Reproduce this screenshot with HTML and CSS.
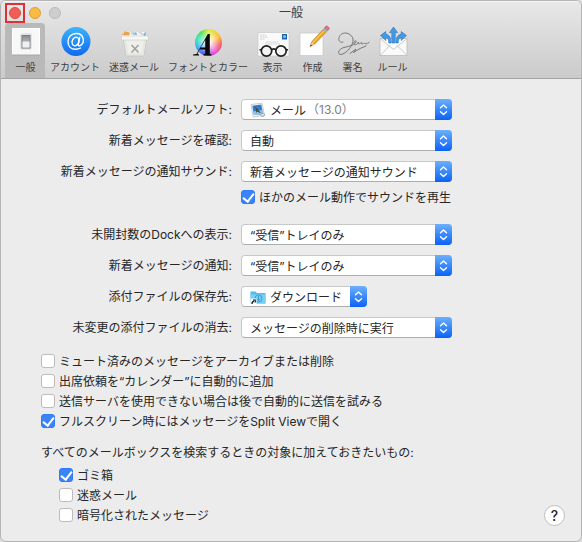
FILE: index.html
```html
<!DOCTYPE html>
<html lang="ja">
<head>
    <meta charset="UTF-8">
    <meta name="viewport" content="width=device-width, initial-scale=1.0">
    <title>一般</title>
    <link rel="stylesheet" href="styles.css">
</head>
<body>
    <svg width="0" height="0" class="defs" aria-hidden="true">
        <defs>
            <linearGradient id="blue" x1="0" y1="0" x2="0" y2="1">
                <stop offset="0" stop-color="#3cb4fb"/>
                <stop offset="1" stop-color="#1068f2"/>
            </linearGradient>
            <linearGradient id="grey" x1="0" y1="0" x2="0" y2="1">
                <stop offset="0" stop-color="#8b8e92"/>
                <stop offset="1" stop-color="#d5d7d9"/>
            </linearGradient>
            <symbol id="arrows" viewBox="0 0 17 21">
                <path d="M5.500 8.800 8.500 6 11.500 8.800M5.500 12.700 8.500 15.500 11.500 12.700" fill="none" stroke="#fff" stroke-width="1.400" stroke-linecap="round" stroke-linejoin="round"/>
            </symbol>
        </defs>
    </svg>
    <div class="window">
        <header>
            <div class="titlebar">
                <div class="lights">
                    <span class="close-mark"><button type="button" class="light close" aria-label="閉じる"></button></span>
                    <button type="button" class="light minimize" aria-label="しまう"></button>
                    <button type="button" class="light zoom" aria-label="拡大" disabled></button>
                </div>
                <h1>一般</h1>
            </div>
            <nav class="toolbar">
                <button type="button" class="tool active">
                    <svg width="32" height="32" viewBox="0 0 32 32">
                        <rect x="2.5" y="3.5" width="27" height="26" fill="#f8f8f9" stroke="#fff"/>
                        <path d="M2 30h28" stroke="#a5a5a5"/>
                        <rect x="10" y="8" width="12" height="17" rx="2" fill="#e4e5e7"/>
                        <rect x="12" y="10.500" width="8" height="12.500" fill="url(#grey)" stroke="#777a7e"/>
                        <path d="M12.500 16.500h7v6h-7z" fill="#eef0f1"/>
                    </svg>
                    一般
                </button>
                <button type="button" class="tool">
                    <svg width="32" height="32" viewBox="0 0 32 32">
                        <circle cx="17" cy="16.500" r="14.500" fill="url(#blue)"/>
                        <g fill="none" stroke="#fff" stroke-width="1.400" stroke-linecap="round">
                            <ellipse cx="16.500" cy="16.500" rx="3.300" ry="4.300" transform="rotate(18 16.500 16.500)"/>
                            <path d="M20.700 12.500 19.300 19c-.3 2 1.300 2.200 2.700 1.100 1.800-1.400 2.700-4 2.200-6.300C23.500 10.200 20.700 8.500 17.200 8.500 12.500 8.500 9 12 9 16.700c0 4.600 3 7.500 7.600 7.500 1.900 0 3.600-.4 5-1.200"/>
                        </g>
                    </svg>
                    アカウント
                </button>
                <button type="button" class="tool">
                    <svg width="32" height="32" viewBox="0 0 32 32">
                        <path d="m4 11 1-4 6-1 4 2 3-2 4 2 3-2 3 3-1 3z" fill="#f5f6f7" stroke="#ccc" stroke-width=".5"/>
                        <path d="m4 10 3-3.500 5 1-1 3z" fill="#eda04c"/>
                        <path d="m15 10 3-3 1 3zM25 10l3-3-1 4z" fill="#4ba3d8"/>
                        <path d="m12 9 4-2 3 3zM21 7l3 3 2-1z" fill="#b9c9d5"/>
                        <path d="M5 13h24l-3 18H8z" fill="#e6e6e2" stroke="#c3c3bf" stroke-width=".7"/>
                        <path d="M8 14h18l-2 14H10z" fill="#efefeb"/>
                        <path d="M3.500 11h27v4h-27z" fill="#f7f7f4" stroke="#c9c9c5" stroke-width=".6"/>
                        <path d="m13.500 20 7 7.500m0-7.500-7 7.500" stroke="#a09d93" stroke-width="1.400"/>
                    </svg>
                    迷惑メール
                </button>
                <button type="button" class="tool">
                    <svg width="32" height="32" viewBox="0 0 32 32">
                        <foreignObject x="3" y="4" width="27" height="27"><div class="wheel"></div></foreignObject>
                        <path d="M1 30.500h6v-1l-1.500-.5 2-4.500h5.700v4.200l-1.800.8v1h8v-1l-1.600-.7V9h-2L4.500 29l-3.500.5zM8.600 22.500l4.600-7.500v7.500z" fill="#090909"/>
                    </svg>
                    フォントとカラー
                </button>
                <button type="button" class="tool">
                    <svg width="32" height="32" viewBox="0 0 32 32">
                        <rect x="1" y="7.500" width="31" height="23.500" fill="#fafafa" stroke="#c4c4c4" stroke-width=".6"/>
                        <path d="M3 10h6M3 12h8M3 14h5M9 17h12M8 19h15" stroke="#bcbcbc" stroke-width=".7" stroke-dasharray="2 .6"/>
                        <rect x="25" y="9" width="5" height="5.500" fill="#1b68ae"/>
                        <circle cx="27.500" cy="11.500" r="1.500" fill="#71c4f0"/>
                        <g fill="#f4f4f4" stroke="#202020" stroke-width="1.700">
                            <circle cx="9.500" cy="26" r="5.200"/>
                            <circle cx="24" cy="26" r="5.200"/>
                            <path d="M14.500 25c1-1.600 3.500-1.600 4.500 0M4.500 24.500 2.500 25M29 24.500l2 .5" fill="none"/>
                        </g>
                    </svg>
                    表示
                </button>
                <button type="button" class="tool">
                    <svg width="32" height="32" viewBox="0 0 32 32">
                        <path d="M3 8h23v22.500H3z" fill="#fdfdfd" stroke="#c2c2c2" stroke-width=".6"/>
                        <path d="m13 21.500 2-5L27 3.500l3 2.700-12.500 13z" fill="#f3aa21" stroke="#a26e1b" stroke-width=".6"/>
                        <path d="m16 17.500 12-13" stroke="#ffd45c"/>
                        <path d="m13 21.500 2-4.500 2.500 2.200z" fill="#edcc9b"/>
                        <path d="m13 21.500 1-2 1 1z" fill="#222"/>
                        <path d="m25.500 5 2-2.300 3.300 2.900-2 2.200z" fill="#a6aeb2"/>
                        <path d="m27.500 2.700 1.300-1.400c1.400-1 4.200 1.400 3.200 2.900l-1.200 1.400z" fill="#df728b" stroke="#a45267" stroke-width=".5"/>
                    </svg>
                    作成
                </button>
                <button type="button" class="tool">
                    <svg width="32" height="32" viewBox="0 0 32 32">
                        <path d="M6 17C2 19 0 13 4 9.500 8 6 15 9 16 14 17 20 9 29 4 29.500 0 29.500 1 24 7 22.500 13 21 18 20 19 17 19.500 14.500 16.500 16 17 18.500 17.500 21 20.500 19.500 21.500 17 21 21 24 17.500 24.500 17.500 24 21 27 17.500 27.500 18 28 19.500 30 19 32 17.500M13 28.500 19 24 16.500 27.500 23 23.500 29 21" fill="none" stroke="#777" stroke-linecap="round" stroke-linejoin="round"/>
                    </svg>
                    署名
                </button>
                <button type="button" class="tool">
                    <svg width="32" height="32" viewBox="0 0 32 32">
                        <path d="M3 13.500h27V30.500H3z" fill="#fafafa" stroke="#b5b5b5" stroke-width=".7"/>
                        <path d="m3 30.500 10-10m17 10-10-10M3 13.500l13.500 11L30 13.500" fill="none" stroke="#c2c2c2" stroke-width=".9"/>
                        <path d="M14.800 18V7.500H12.500l4-5.500 4 5.500h-2.300V18zM11.800 18c0-3.500-.8-5-3-5.500v3L3.500 10.500 8.800 6.500v2.800c4 .5 5.200 4 5.200 8.700zM21.200 18c0-3.500.8-5 3-5.500v3L29.500 10.500 24.200 6.500v2.800c-4 .5-5.200 4-5.200 8.700z" fill="#429aea" stroke="#2870b8" stroke-width=".6"/>
                    </svg>
                    ルール
                </button>
            </nav>
        </header>
        <main>
            <form>
                <div class="fields">
                    <label for="mailer">デフォルトメールソフト:</label>
                    <div class="popup with-icon">
                        <select id="mailer"><option>メール</option></select>
                        <span class="content">
                            <svg width="16" height="16" viewBox="0 0 16 16">
                                <path d="m1 2.500 11-1.300 2.500 12L3.200 15z" fill="#fafafa" stroke="#aaa" stroke-width=".6"/>
                                <path d="m2.300 3.700 9-1.100 1.700 9.400-9.100 1.100z" fill="#2a7fd2"/>
                                <path d="m3.300 9.500 9.100-1.500.6 4-9.100 1.100z" fill="#8cc5ed"/>
                                <path d="m4.500 4.500 2.700 2 3.800 4.700-3.600-1.500-1.400 1 .2-2.400z" fill="#4f4a35"/>
                                <path d="M10 13c0-2.300 4.300-2.300 4.500 0 0 2.200-3.800 2.200-3.800 0" fill="none" stroke="#8c979d" stroke-width=".8"/>
                            </svg>
                            <span class="version">（13.0）</span>
                        </span>
                        <svg class="arrows" width="17" height="21"><use href="#arrows"/></svg>
                    </div>

                    <label for="check">新着メッセージを確認:</label>
                    <div class="popup">
                        <select id="check"><option>自動</option></select>
                        <svg class="arrows" width="17" height="21"><use href="#arrows"/></svg>
                    </div>

                    <label for="sound">新着メッセージの通知サウンド:</label>
                    <div class="popup">
                        <select id="sound"><option>新着メッセージの通知サウンド</option></select>
                        <svg class="arrows" width="17" height="21"><use href="#arrows"/></svg>
                    </div>
                </div>
                <label class="check sound-check"><input type="checkbox" checked>ほかのメール動作でサウンドを再生</label>

                <div class="fields">
                    <label for="dock">未開封数のDockへの表示:</label>
                    <div class="popup">
                        <select id="dock"><option>“受信”トレイのみ</option></select>
                        <svg class="arrows" width="17" height="21"><use href="#arrows"/></svg>
                    </div>

                    <label for="notice">新着メッセージの通知:</label>
                    <div class="popup">
                        <select id="notice"><option>“受信”トレイのみ</option></select>
                        <svg class="arrows" width="17" height="21"><use href="#arrows"/></svg>
                    </div>

                    <label for="folder">添付ファイルの保存先:</label>
                    <div class="popup with-icon short">
                        <select id="folder"><option>ダウンロード</option></select>
                        <span class="content">
                            <svg width="16" height="16" viewBox="0 0 16 16">
                                <path d="M.5 2.500h5L7 4h8.500v10.500H.5z" fill="#57b9e8"/>
                                <path d="M.5 5.300h15v9.200H.5z" fill="#76d0f5"/>
                                <circle cx="8.500" cy="9.500" r="3.500" fill="none" stroke="#3d9fcf"/>
                                <path d="M8.500 7v4.500M6.700 9.800l1.800 1.800 1.800-1.800" fill="none" stroke="#3d9fcf"/>
                                <path d="M.5 9.500h6V16h-6z" fill="#fff"/>
                                <path d="M2 15c0-2 .4-2.700 2-2.700M3 11h2.200v2.500" fill="none" stroke="#111" stroke-width="1.200"/>
                            </svg>
                        </span>
                        <svg class="arrows" width="17" height="21"><use href="#arrows"/></svg>
                    </div>

                    <label for="erase">未変更の添付ファイルの消去:</label>
                    <div class="popup">
                        <select id="erase"><option>メッセージの削除時に実行</option></select>
                        <svg class="arrows" width="17" height="21"><use href="#arrows"/></svg>
                    </div>
                </div>

                <div class="options">
                    <label class="check"><input type="checkbox">ミュート済みのメッセージをアーカイブまたは削除</label>
                    <label class="check"><input type="checkbox">出席依頼を“カレンダー”に自動的に追加</label>
                    <label class="check"><input type="checkbox">送信サーバを使用できない場合は後で自動的に送信を試みる</label>
                    <label class="check"><input type="checkbox" checked>フルスクリーン時にはメッセージをSplit Viewで開く</label>
                </div>

                <fieldset>
                    <legend>すべてのメールボックスを検索するときの対象に加えておきたいもの:</legend>
                    <label class="check"><input type="checkbox" checked>ゴミ箱</label>
                    <label class="check"><input type="checkbox">迷惑メール</label>
                    <label class="check"><input type="checkbox">暗号化されたメッセージ</label>
                </fieldset>
            </form>
            <button type="button" class="help" aria-label="ヘルプ">?</button>
        </main>
    </div>
</body>
</html>
```
FILE: styles.css
```css
* {
    box-sizing: border-box;
}
body {
    margin: 0;
    background-color: #ddd;
    color: #262626;
    font-family: Inter, "Noto Sans CJK JP", sans-serif;
    font-size: 12px;
    line-height: 20px;
}
button, select, input {
    font: inherit;
    color: inherit;
    margin: 0;
}
.defs {
    position: absolute;
}
.window {
    display: flex;
    flex-direction: column;
    min-height: 100vh;
    background-color: #ececec;
    border: 1px solid #b4b4b4;
    border-radius: 6px;
    overflow: hidden;
}
header {
    background: linear-gradient(#e8e8e8, #cbcbcb);
    border-bottom: 1px solid #a4a4a4;
    padding: 0 4px;
    box-shadow: inset 0 1px #f5f5f5;
}
.titlebar {
    display: grid;
    grid-template-columns: 1fr auto 1fr;
    align-items: center;
    height: 22px;
}
.titlebar h1 {
    align-self: start;
    margin: 0;
    font-size: 12px;
    font-weight: 400;
    line-height: 24px;
    color: #404040;
}
.lights {
    display: flex;
    align-items: center;
    gap: 8px;
}
.close-mark {
    display: flex;
    align-items: center;
    justify-content: center;
    width: 20px;
    height: 20px;
    margin-right: -4px;
    border: 2px solid #dc3237;
}
.light {
    width: 12px;
    height: 12px;
    padding: 0;
    border: 1px solid #b9b9b9;
    border-radius: 50%;
    background-color: #cecece;
}
.close {
    background-color: #f25e57;
    border-color: #de4b45;
}
.minimize {
    background-color: #f8bb44;
    border-color: #dd9f32;
}
.toolbar {
    display: flex;
}
.tool {
    display: flex;
    flex-direction: column;
    align-items: center;
    min-width: 40px;
    height: 55px;
    padding: 2px 4px 0 5px;
    border: none;
    background: none;
    font-size: 10px;
    line-height: 20px;
    color: #404040;
    white-space: nowrap;
}
.tool svg {
    flex: none;
    margin: 0 -2px;
    overflow: visible;
}
.tool.active {
    background-color: #b9b9b9;
    border-radius: 4px 4px 0 0;
}
.wheel {
    width: 27px;
    height: 27px;
    border-radius: 50%;
    background: radial-gradient(circle, #fff 5%, transparent 65%), conic-gradient(#d9ef3d, #ffbd35 60deg, #f35d64 100deg, #e64dd9 150deg, #5b4aee 200deg, #35a9f5 245deg, #36e1c1 285deg, #55e35b 325deg, #d9ef3d);
}
main {
    position: relative;
    flex: 1;
    padding: 20px 16px 16px 40px;
}
.fields {
    display: grid;
    grid-template-columns: 191px 211px;
    gap: 10px 9px;
    line-height: 21px;
}
.fields > label {
    text-align: right;
    white-space: nowrap;
}
.popup {
    display: grid;
    height: 21px;
}
.popup > * {
    grid-area: 1 / 1;
}
.popup select {
    appearance: none;
    width: 100%;
    height: 21px;
    padding: 0 20px 0 8px;
    border: 1px solid #c8c8c8;
    border-bottom-color: #adadad;
    border-radius: 4px;
    background-color: #fff;
}
.popup.with-icon select {
    padding-left: 28px;
}
.popup.short {
    width: 126px;
}
.content {
    display: flex;
    align-items: center;
    gap: 41px;
    padding-left: 9px;
    pointer-events: none;
}
.version {
    color: #808080;
}
.arrows {
    justify-self: end;
    border-radius: 0 4px 4px 0;
    background: linear-gradient(#6cb0fb, #0a62f7);
    pointer-events: none;
}
.check {
    display: flex;
    align-items: flex-start;
    gap: 4px;
    height: 20px;
    line-height: 22px;
    white-space: nowrap;
}
.check input {
    appearance: none;
    display: grid;
    place-items: center;
    flex: none;
    width: 14px;
    height: 14px;
    margin-top: 3px;
    border: 1px solid #bcbcbc;
    border-radius: 3px;
    background-color: #fff;
}
.check input:checked {
    border-color: #2f7bf6;
    background-color: #3b84f7;
}
.check input:checked::before {
    content: "";
    width: 5px;
    height: 9px;
    margin-bottom: 3px;
    border: solid #fff;
    border-width: 0 2px 2px 0;
    transform: rotate(38deg);
}
.sound-check {
    margin: 5px 0 17px 200px;
}
.options {
    margin-top: 13px;
}
fieldset {
    margin: 12px 0 0;
    padding: 0 0 0 18px;
    border: none;
}
legend {
    margin: 0 0 2px -18px;
    padding: 0;
    white-space: nowrap;
}
.help {
    position: absolute;
    right: 16px;
    bottom: 15px;
    width: 21px;
    height: 21px;
    padding: 0;
    border: 1px solid #bdbdbd;
    border-radius: 50%;
    background-color: #fff;
    font-size: 14px;
    font-weight: 500;
    line-height: 18px;
}
```
